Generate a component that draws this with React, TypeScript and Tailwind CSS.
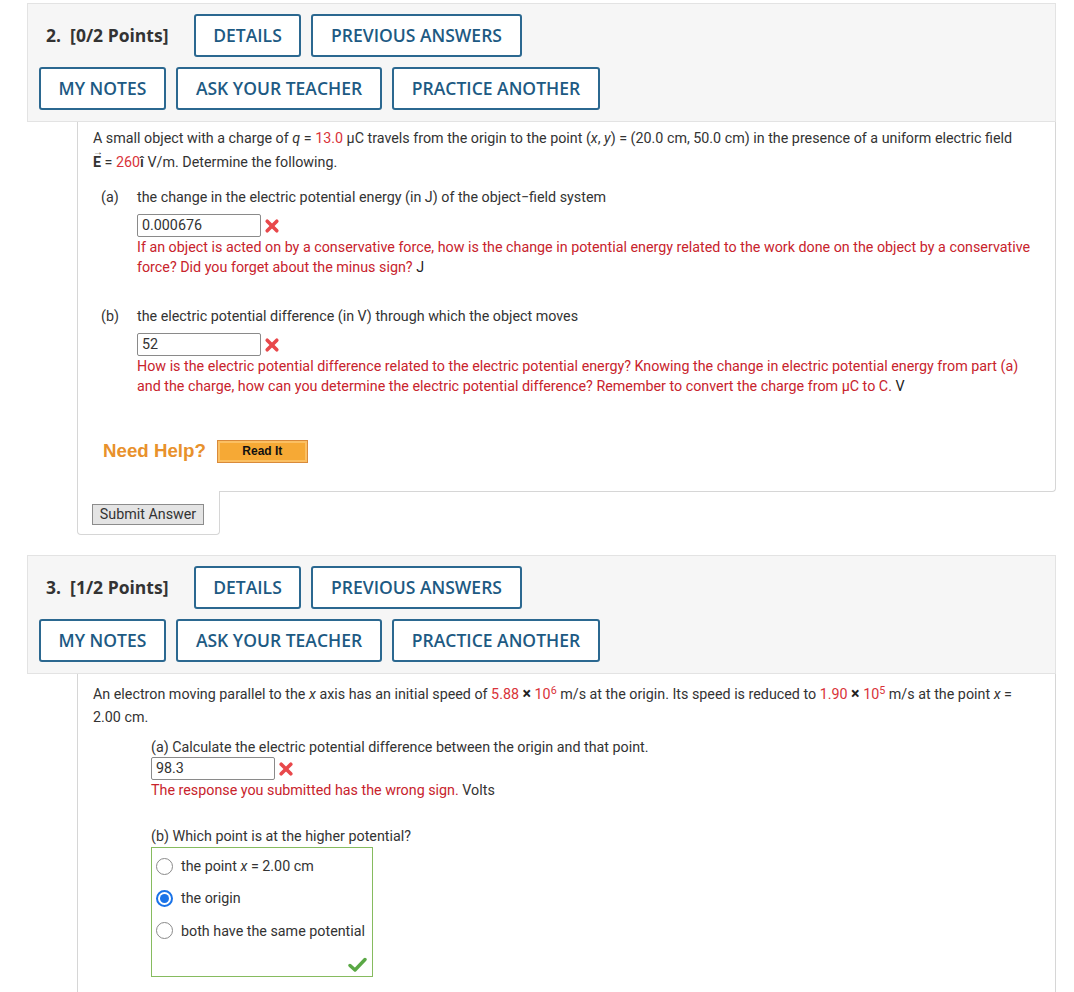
import React from "react";

const body = { fontFamily: "Roboto, 'Liberation Sans', sans-serif" };
const open = { fontFamily: "'Open Sans', 'Liberation Sans', sans-serif" };

function XMark() {
  return (
    <svg width="16" height="16" viewBox="0 0 16 16" className="ml-[3px] mt-[4px]">
      <path d="M3.2 3.2 L12.8 12.8 M12.8 3.2 L3.2 12.8" stroke="#e8484b" strokeWidth="3.6" strokeLinecap="round" />
    </svg>
  );
}

function Check() {
  return (
    <svg width="19" height="15" viewBox="0 0 19 15">
      <path d="M2 8.5 L7 13 L17 2.5" stroke="#5aa845" strokeWidth="3.4" strokeLinecap="round" strokeLinejoin="round" fill="none" />
    </svg>
  );
}

function Btn({ w, h, children }: { w: string; h: string; children: React.ReactNode }) {
  return (
    <div
      className={`${w} ${h} flex items-center justify-center border-2 border-[#2b6890] rounded-[3px] bg-white text-[17.5px] font-semibold text-[#1d5a83]`}
      style={open}
    >
      {children}
    </div>
  );
}

function Header({ title }: { title: string }) {
  return (
    <div className="ml-[27px] w-[1029px] bg-[#f6f6f6] border border-[#e3e3e3] pt-[10px] pb-[11px] pl-[11px]">
      <div className="flex items-center">
        <span className="ml-[7px] w-[148px] font-bold text-[17.5px] text-[#333] whitespace-pre" style={open}>
          {title}
        </span>
        <div className="flex gap-[10px]">
          <Btn w="w-[107px]" h="h-[43px]">DETAILS</Btn>
          <Btn w="w-[211px]" h="h-[43px]">PREVIOUS ANSWERS</Btn>
        </div>
      </div>
      <div className="flex gap-[10px] mt-[10px]">
        <Btn w="w-[127px]" h="h-[43px]">MY NOTES</Btn>
        <Btn w="w-[206px]" h="h-[43px]">ASK YOUR TEACHER</Btn>
        <Btn w="w-[208px]" h="h-[43px]">PRACTICE ANOTHER</Btn>
      </div>
    </div>
  );
}

function Input({ value }: { value: string }) {
  return (
    <div className="flex items-start">
      <div className="w-[124px] h-[23px] border border-[#8a8a8a] rounded-[2px] bg-white px-[4px] text-[14.3px] leading-[21px] text-[#333]">
        {value}
      </div>
      <XMark />
    </div>
  );
}

const red = "text-[#d9333a]";
const fb = "text-[#c8232c]";

function Radio({ checked }: { checked?: boolean }) {
  if (checked) {
    return (
      <span className="w-[17px] h-[17px] rounded-full border-2 border-[#1a73e8] flex items-center justify-center bg-white">
        <span className="w-[9px] h-[9px] rounded-full bg-[#1a73e8]" />
      </span>
    );
  }
  return <span className="w-[17px] h-[17px] rounded-full border border-[#8a8a8a] bg-white" />;
}

export default function App() {
  return (
    <div className="w-[1074px] min-h-[992px] bg-white pt-[3px] text-[#333]" style={body}>
      <Header title="2.  [0/2 Points]" />
      <div className="ml-[77px] w-[979px] border-l border-r border-b border-[#d6d6d6] rounded-br-[4px] bg-white pl-[15px] pr-[14px] pt-[4px] pb-[29px] text-[14.3px]">
        <p className="leading-[24px]">
          A small object with a charge of <i>q</i> = <span className={red}>13.0</span> μC travels from the origin to the
          point (<i>x</i>, <i>y</i>) = (20.0 cm, 50.0 cm) in the presence of a uniform electric field{" "}
          <span className="whitespace-nowrap">
            <span className="relative inline-block font-bold">
              E
              <span className="absolute left-[0px] -top-[10px] text-[10px] font-normal">→</span>
            </span>
            {"\u00a0=\u00a0"}
            <span className={red}>260</span>
            <span className="font-semibold">î</span>
          </span>{" "}
          V/m. Determine the following.
        </p>

        <div className="mt-[13px] flex leading-[20px]">
          <span className="ml-[8px] w-[36px]">(a)</span>
          <div className="flex-1">
            <div>the change in the electric potential energy (in J) of the object−field system</div>
            <div className="mt-[7px]">
              <Input value="0.000676" />
            </div>
            <div className={fb}>
              If an object is acted on by a conservative force, how is the change in potential energy related to the
              work done on the object by a conservative force? Did you forget about the minus sign?{" "}
              <span className="text-[#222]">J</span>
            </div>
          </div>
        </div>

        <div className="mt-[29px] flex leading-[20px]">
          <span className="ml-[8px] w-[36px]">(b)</span>
          <div className="flex-1">
            <div>the electric potential difference (in V) through which the object moves</div>
            <div className="mt-[7px]">
              <Input value="52" />
            </div>
            <div className={fb}>
              How is the electric potential difference related to the electric potential energy? Knowing the change in
              electric potential energy from part (a) and the charge, how can you determine the electric potential
              difference? Remember to convert the charge from μC to C. <span className="text-[#222]">V</span>
            </div>
          </div>
        </div>

        <div className="mt-[44px] ml-[10px] flex items-center h-[22px]">
          <span
            className="text-[18.7px] font-bold text-[#e8912c]"
            style={{ fontFamily: "'Liberation Sans', Arial, sans-serif" }}
          >
            Need Help?
          </span>
          <span
            className="ml-[11px] w-[91px] h-[23px] flex items-center justify-center border border-[#d98a3a] bg-[#f6a935] text-[12px] font-bold text-[#111] shadow-[inset_0_0_0_2px_#fbc063]"
            style={{ fontFamily: "'Liberation Sans', Arial, sans-serif" }}
          >
            Read It
          </span>
        </div>
      </div>

      <div className="ml-[77px] w-[143px] h-[44px] mt-[-1px] border-l border-r border-b border-[#d6d6d6] rounded-b-[4px] bg-white pl-[14px] pt-[13px]">
        <div className="w-[112px] h-[21px] flex items-center justify-center bg-[#e4e4e4] border border-[#8c8c8c] text-[14.3px] text-[#333]">
          Submit Answer
        </div>
      </div>

      <div className="mt-[20px]">
        <Header title="3.  [1/2 Points]" />
      </div>
      <div className="ml-[77px] w-[979px] border-l border-r border-[#d6d6d6] bg-white pl-[15px] pr-[14px] pt-[8px] pb-[60px] text-[14.3px]">
        <p className="leading-[23px]">
          An electron moving parallel to the <i>x</i> axis has an initial speed of <span className={red}>5.88</span>{" "}
          <span className="font-bold text-[16px] text-[#222]">×</span> <span className={red}>10<sup>6</sup></span> m/s at the
          origin. Its speed is reduced to <span className={red}>1.90</span>{" "}
          <span className="font-bold text-[16px] text-[#222]">×</span> <span className={red}>10<sup>5</sup></span> m/s at the
          point <i>x</i> = 2.00 cm.
        </p>
        <div className="ml-[58px] mt-[8px] leading-[20px]">
          <div>(a) Calculate the electric potential difference between the origin and that point.</div>
          <div className="mt-[0px]">
            <Input value="98.3" />
          </div>
          <div>
            <span className={fb}>The response you submitted has the wrong sign.</span> Volts
          </div>
          <div className="mt-[26px]">(b) Which point is at the higher potential?</div>
          <div className="mt-[1px] w-[222px] h-[130px] border border-[#86bb5f] pt-[2px]">
            <div className="h-[32px] flex items-center pl-[4px] gap-[8px]">
              <Radio />
              <span>
                the point <i>x</i> = 2.00 cm
              </span>
            </div>
            <div className="h-[32px] flex items-center pl-[4px] gap-[8px]">
              <Radio checked />
              <span>the origin</span>
            </div>
            <div className="h-[33px] flex items-center pl-[4px] gap-[8px]">
              <Radio />
              <span>both have the same potential</span>
            </div>
            <div className="flex justify-end pr-[5px] pt-[10px]">
              <Check />
            </div>
          </div>
        </div>
      </div>
    </div>
  );
}
